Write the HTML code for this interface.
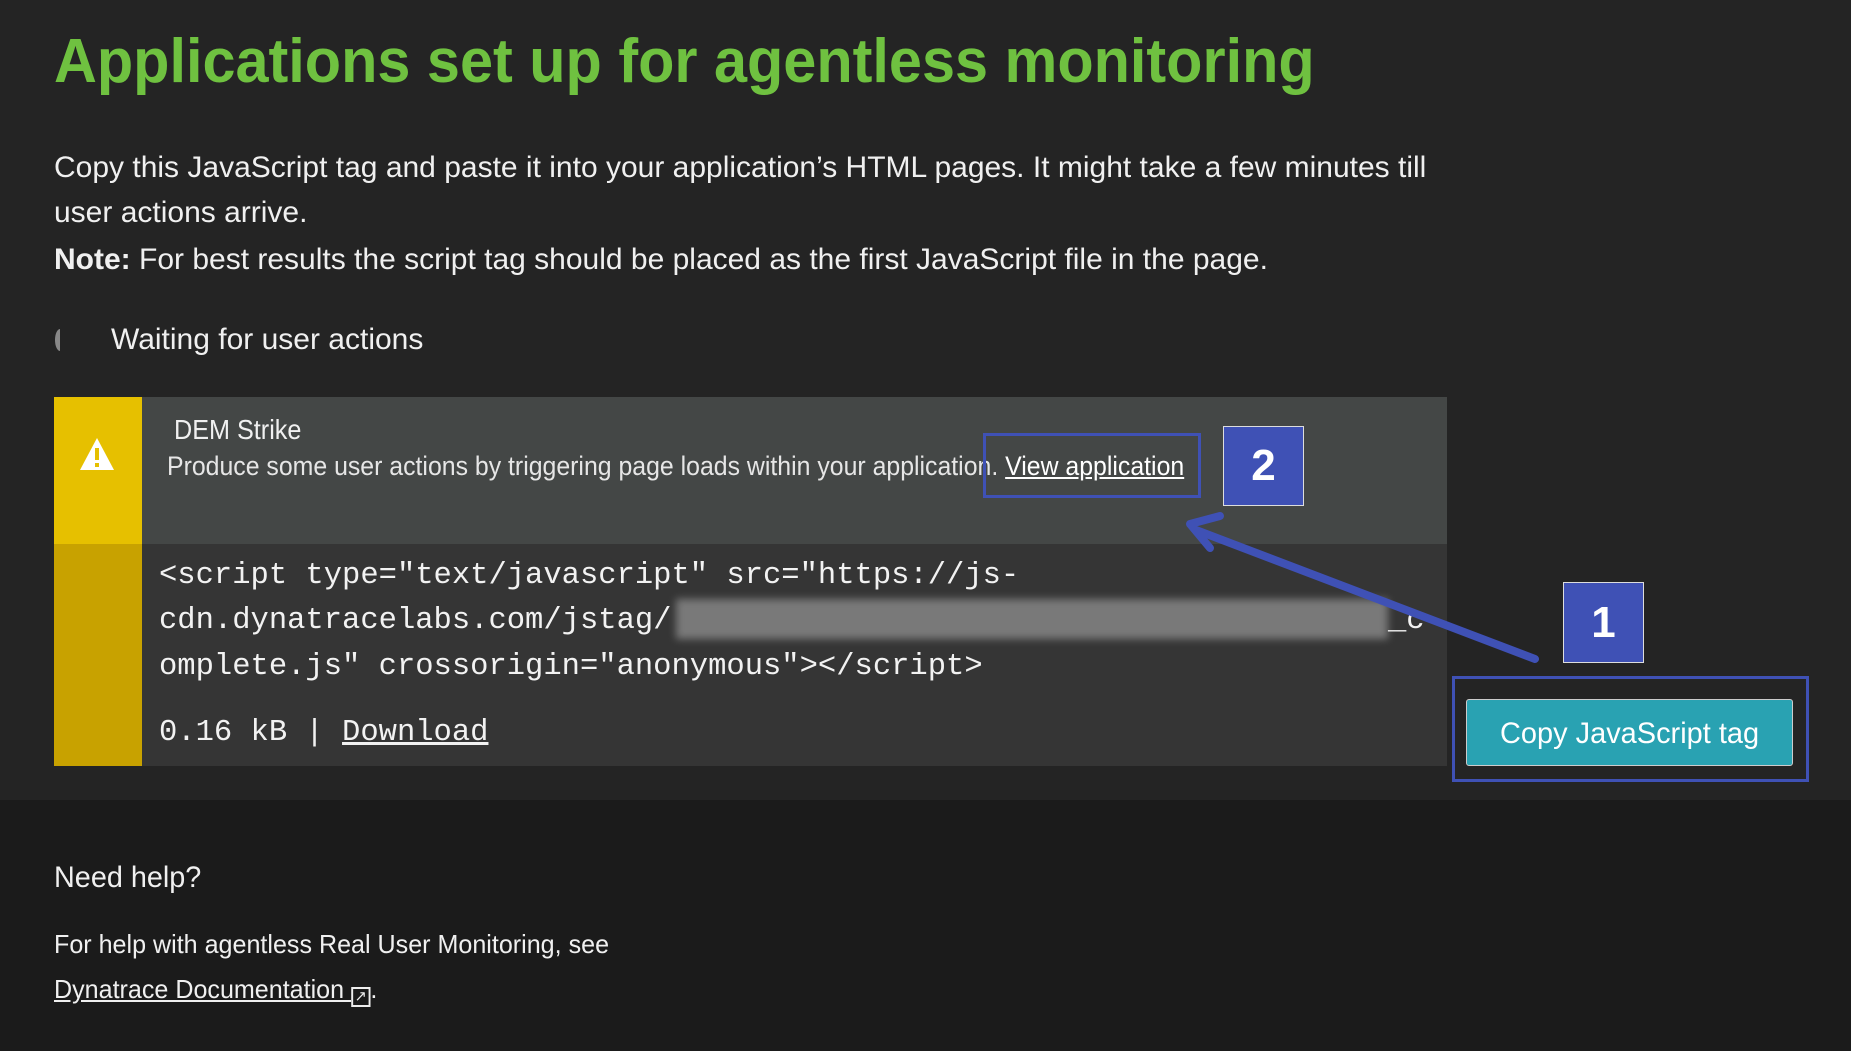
<!DOCTYPE html>
<html><head><meta charset="utf-8"><style>
*{margin:0;padding:0;box-sizing:border-box}
body{width:1851px;height:1051px;overflow:hidden;background:#1b1b1b;font-family:"Liberation Sans",sans-serif;color:#f0f0f0;position:relative}
.top{position:absolute;left:0;top:0;width:1851px;height:800px;background:#242424}
.t{position:absolute;white-space:nowrap;transform-origin:left center;line-height:1}
.mono{font-family:"Liberation Mono",monospace;font-size:30.5px;color:#f2f2f2}
</style></head><body>
<div class="top"></div>
<div class="t" style="left:54px;top:31px;font-size:62px;font-weight:bold;color:#6fc140;transform:scaleX(.958)">Applications set up for agentless monitoring</div>
<div class="t" style="left:54px;top:153px;font-size:30px;transform:scaleX(1.0)">Copy this JavaScript tag and paste it into your application’s HTML pages. It might take a few minutes till</div>
<div class="t" style="left:54px;top:198px;font-size:30px;transform:scaleX(1.0)">user actions arrive.</div>
<div class="t" style="left:54px;top:245px;font-size:30px;transform:scaleX(1.0)"><b>Note:</b> For best results the script tag should be placed as the first JavaScript file in the page.</div>
<div style="position:absolute;left:55px;top:329px;width:10px;height:22px;border-radius:50%;border-left:5px solid #888"></div>
<div class="t" style="left:111px;top:325px;font-size:30px;transform:scaleX(1.0)">Waiting for user actions</div>

<div style="position:absolute;left:54px;top:397px;width:88px;height:147px;background:#e6c000"></div>
<div style="position:absolute;left:54px;top:544px;width:88px;height:222px;background:#c8a200"></div>
<div style="position:absolute;left:142px;top:397px;width:1305px;height:147px;background:#444746"></div>
<div style="position:absolute;left:142px;top:544px;width:1305px;height:222px;background:#353535"></div>
<svg style="position:absolute;left:79px;top:437px" width="36" height="34" viewBox="0 0 36 34"><path d="M18 1 L35 33 H1 Z" fill="#fff"/><rect x="16" y="11" width="4" height="12" fill="#e6c000"/><rect x="16" y="26" width="4" height="4" fill="#e6c000"/></svg>
<div class="t" style="left:174px;top:416px;font-size:28px;transform:scaleX(.9)">DEM Strike</div>
<div class="t" style="left:167px;top:453px;font-size:27px;color:#e6e6e6;transform:scaleX(.92)">Produce some user actions by triggering page loads within your application. <span style="text-decoration:underline;color:#fff">View application</span></div>
<div class="t mono" style="left:159px;top:561px">&lt;script type="text/javascript" src="https://js-</div>
<div class="t mono" style="left:159px;top:606px">cdn.dynatracelabs.com/jstag/</div>
<div style="position:absolute;left:676px;top:599px;width:712px;height:40px;background:#8a8a8a;filter:blur(4px);opacity:.8"></div>
<div class="t mono" style="left:1388px;top:606px">_c</div>
<div class="t mono" style="left:159px;top:652px">omplete.js" crossorigin="anonymous"&gt;&lt;/script&gt;</div>
<div class="t mono" style="left:159px;top:718px">0.16 kB | <span style="text-decoration:underline">Download</span></div>

<div style="position:absolute;left:1466px;top:699px;width:327px;height:67px;background:#29a2b2;border:1px solid #ccc;border-radius:3px"></div>
<div class="t" style="left:1500px;top:719px;font-size:30px;color:#fff;transform:scaleX(.965)">Copy JavaScript tag</div>
<div style="position:absolute;left:1452px;top:676px;width:357px;height:106px;border:3px solid #3f51b5"></div>
<div style="position:absolute;left:983px;top:433px;width:218px;height:65px;border:3px solid #3f51b5"></div>
<div style="position:absolute;left:1223px;top:426px;width:81px;height:80px;background:#3f51b5;border:1px solid #ddd;color:#fff;font-weight:bold;font-size:44px;text-align:center;line-height:78px">2</div>
<div style="position:absolute;left:1563px;top:582px;width:81px;height:81px;background:#3f51b5;border:1px solid #ddd;color:#fff;font-weight:bold;font-size:44px;text-align:center;line-height:79px">1</div>
<svg style="position:absolute;left:0;top:0" width="1851" height="1051"><line x1="1535" y1="659" x2="1196" y2="530" stroke="#3f51b5" stroke-width="8" stroke-linecap="round"/><path d="M1190 524 L1220 516 M1190 524 L1210 548" stroke="#3f51b5" stroke-width="8" stroke-linecap="round" fill="none"/></svg>

<div class="t" style="left:54px;top:863px;font-size:30px;transform:scaleX(.96)">Need help?</div>
<div class="t" style="left:54px;top:931px;font-size:26px;transform:scaleX(.965)">For help with agentless Real User Monitoring, see</div>
<div class="t" style="left:54px;top:976px;font-size:26px;transform:scaleX(.965)"><span style="text-decoration:underline">Dynatrace Documentation <span style="display:inline-block;width:20px;height:20px;border:2px solid #eee;font-size:15px;line-height:15px;text-align:center;vertical-align:-3px">↗</span></span>.</div>
</body></html>
